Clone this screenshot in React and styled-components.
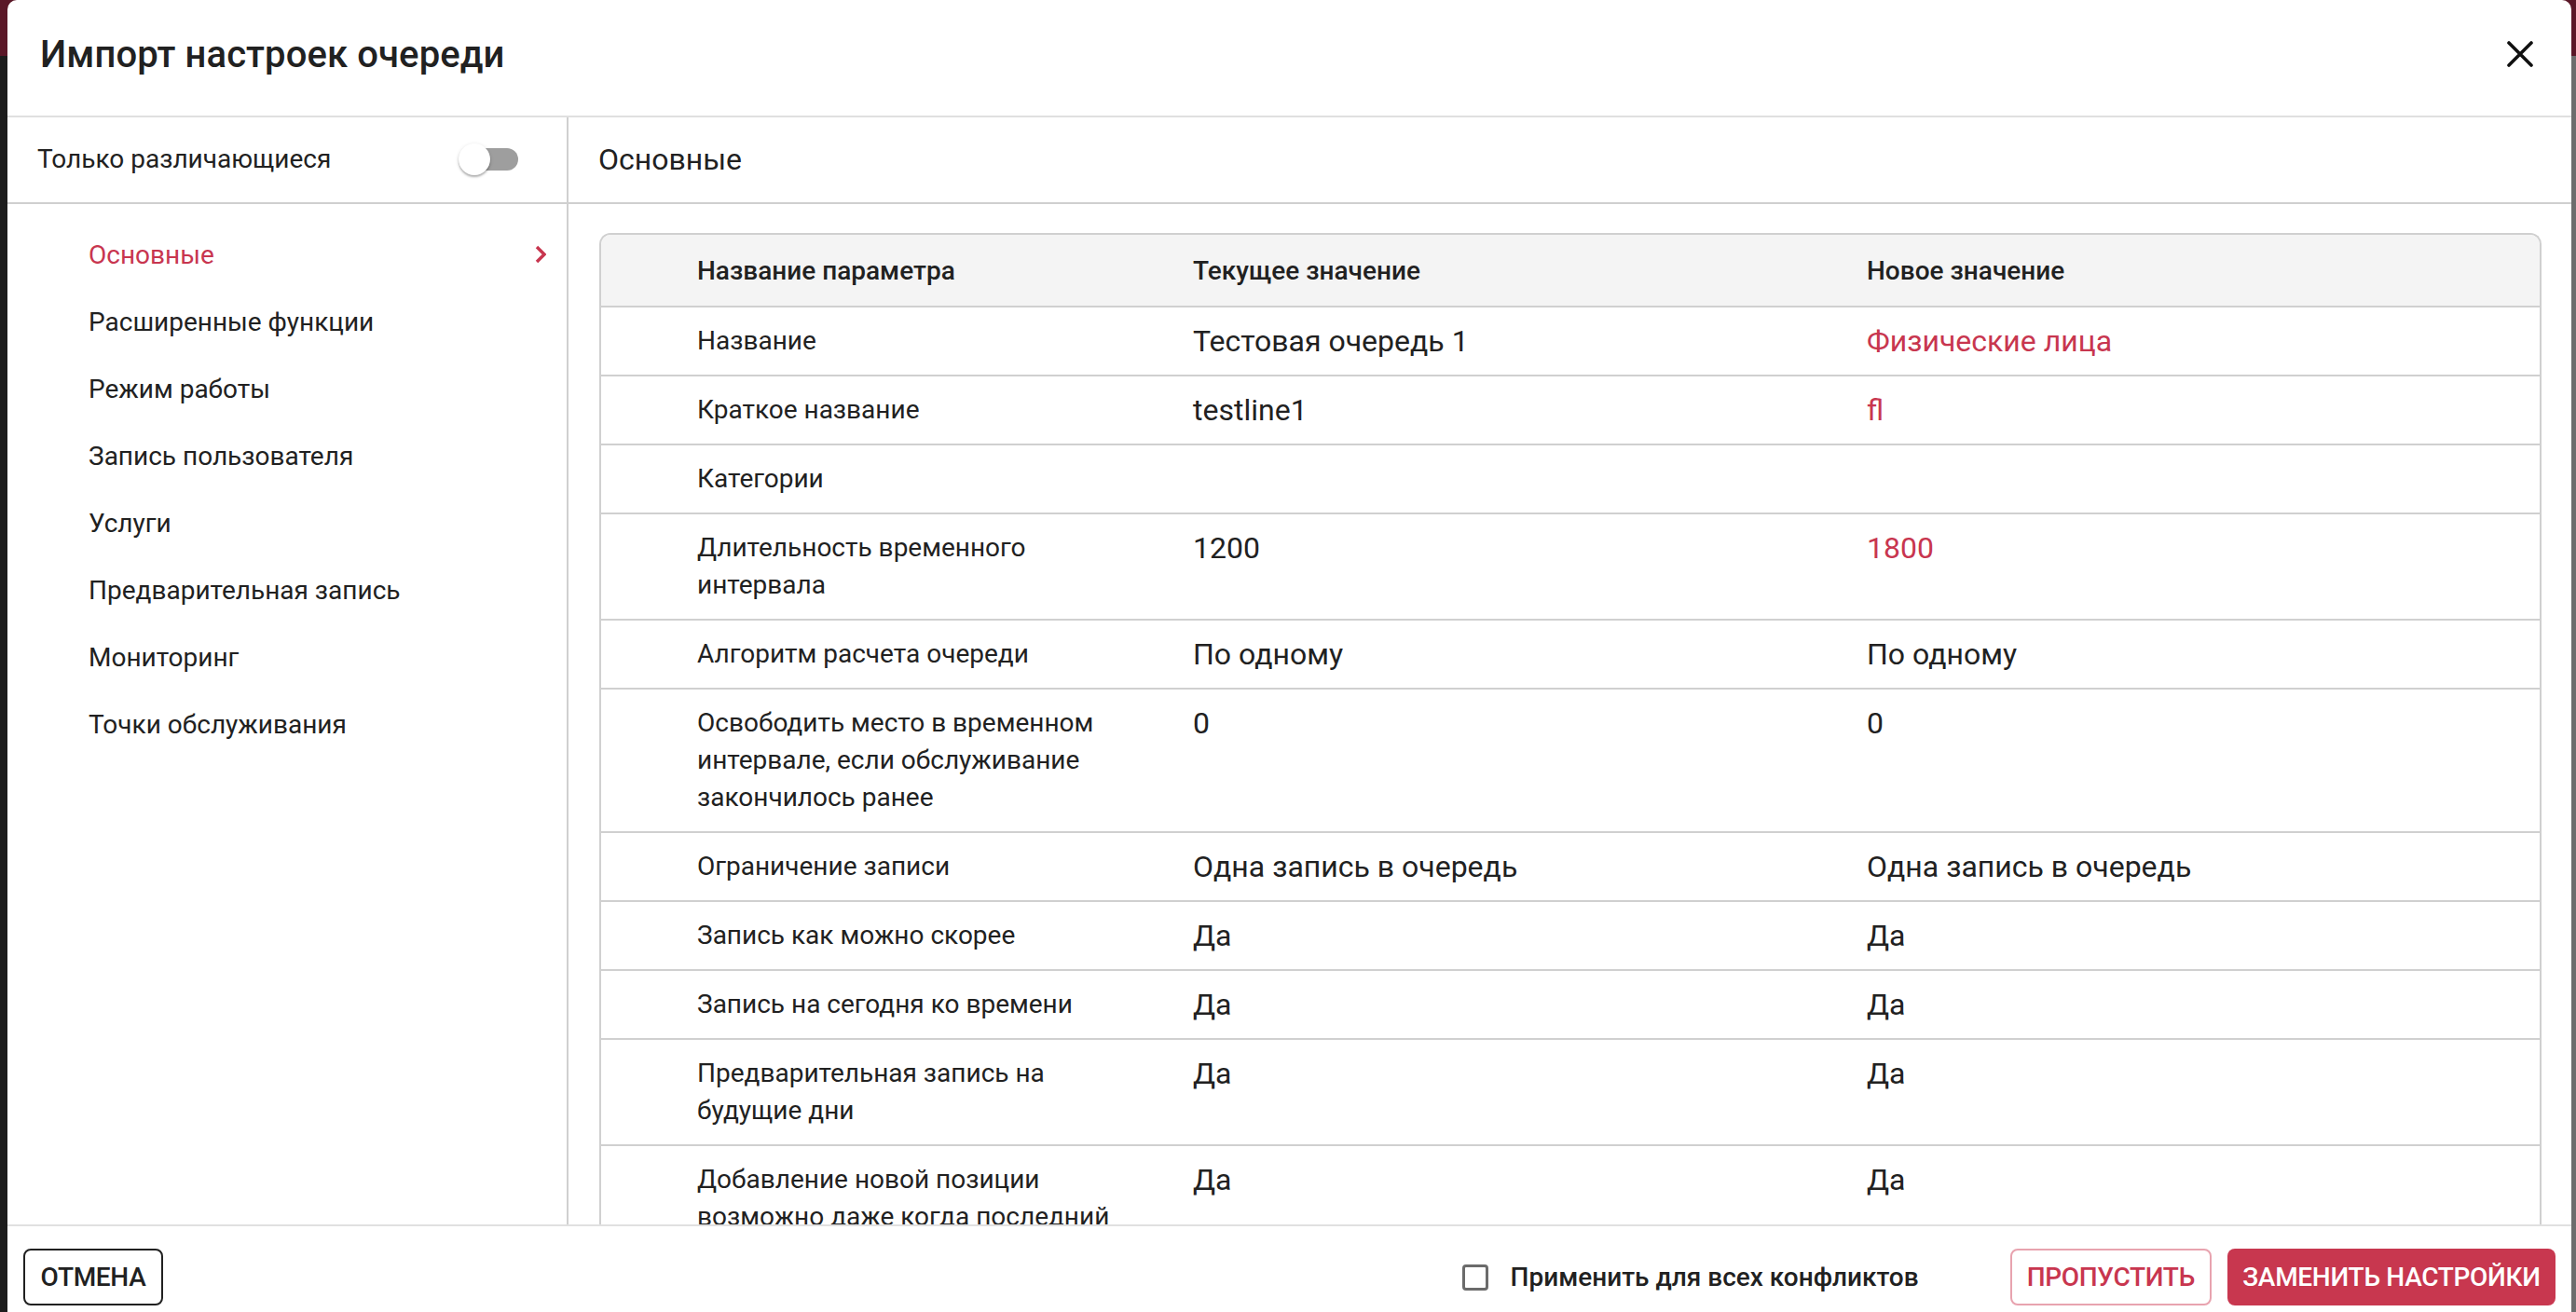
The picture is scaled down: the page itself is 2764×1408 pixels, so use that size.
import styled, { createGlobalStyle } from "styled-components";
import { useState } from "react";

const GlobalStyle = createGlobalStyle`
  html, body {
    margin: 0;
    padding: 0;
    height: 1408px;
    overflow: hidden;
  }
  body {
    font-family: Roboto, "Noto Sans", "Liberation Sans", sans-serif;
    color: #212121;
  }
  * {
    box-sizing: border-box;
  }
`;

const sections = [
  "Основные",
  "Расширенные функции",
  "Режим работы",
  "Запись пользователя",
  "Услуги",
  "Предварительная запись",
  "Мониторинг",
  "Точки обслуживания",
];

const rows = [
  { name: "Название", current: "Тестовая очередь 1", next: "Физические лица", changed: true },
  { name: "Краткое название", current: "testline1", next: "fl", changed: true },
  { name: "Категории", current: "", next: "" },
  { name: "Длительность временного интервала", current: "1200", next: "1800", changed: true },
  { name: "Алгоритм расчета очереди", current: "По одному", next: "По одному" },
  {
    name: "Освободить место в временном интервале, если обслуживание закончилось ранее",
    current: "0",
    next: "0",
  },
  { name: "Ограничение записи", current: "Одна запись в очередь", next: "Одна запись в очередь" },
  { name: "Запись как можно скорее", current: "Да", next: "Да" },
  { name: "Запись на сегодня ко времени", current: "Да", next: "Да" },
  { name: "Предварительная запись на будущие дни", current: "Да", next: "Да" },
  {
    name: "Добавление новой позиции возможно даже когда последний интервал занят",
    current: "Да",
    next: "Да",
  },
  { name: "Показывать на табло", current: "Да", next: "Да" },
];

const App = () => {
  const [onlyDiff, setOnlyDiff] = useState(false);
  const [active, setActive] = useState(0);
  const [applyAll, setApplyAll] = useState(false);

  return (
    <Page>
      <GlobalStyle />
      <Modal>
        <Header>
          <Title>Импорт настроек очереди</Title>
          <CloseButton aria-label="Закрыть">
            <svg width="28" height="28" viewBox="0 0 28 28">
              <path
                d="M2 2 L26 26 M26 2 L2 26"
                stroke="#111"
                strokeWidth="3.6"
                strokeLinecap="round"
              />
            </svg>
          </CloseButton>
        </Header>

        <Body>
          <Sidebar>
            <PanelHead>
              <ToggleLabel>Только различающиеся</ToggleLabel>
              <Switch $on={onlyDiff} onClick={() => setOnlyDiff(!onlyDiff)}>
                <Track $on={onlyDiff} />
                <Thumb $on={onlyDiff} />
              </Switch>
            </PanelHead>
            <NavList>
              {sections.map((s, i) => (
                <NavItem key={s} $active={i === active} onClick={() => setActive(i)}>
                  {s}
                  {i === active && (
                    <svg width="12" height="20" viewBox="0 0 12 20">
                      <polyline
                        points="2,2 10,10 2,18"
                        fill="none"
                        stroke="#c8364f"
                        strokeWidth="3.4"
                      />
                    </svg>
                  )}
                </NavItem>
              ))}
            </NavList>
          </Sidebar>

          <Main>
            <PanelHead>
              <SectionTitle>{sections[active]}</SectionTitle>
            </PanelHead>
            <TableArea>
              <Table>
                <HeadRow>
                  <span />
                  <HeadCell>Название параметра</HeadCell>
                  <HeadCell>Текущее значение</HeadCell>
                  <HeadCell>Новое значение</HeadCell>
                </HeadRow>
                {rows.map((r) => (
                  <Row key={r.name}>
                    <span />
                    <NameCell>{r.name}</NameCell>
                    <ValueCell>{r.current}</ValueCell>
                    <ValueCell $changed={r.changed}>{r.next}</ValueCell>
                  </Row>
                ))}
              </Table>
            </TableArea>
          </Main>
        </Body>

        <Footer>
          <CancelButton>Отмена</CancelButton>
          <FooterRight>
            <CheckLabel onClick={() => setApplyAll(!applyAll)}>
              <CheckBox $checked={applyAll} />
              Применить для всех конфликтов
            </CheckLabel>
            <SkipButton>Пропустить</SkipButton>
            <ReplaceButton>Заменить настройки</ReplaceButton>
          </FooterRight>
        </Footer>
      </Modal>
    </Page>
  );
};

export default App;

const Page = styled.div`
  height: 1408px;
  overflow: hidden;
  padding: 0 5px 0 8px;
  background: linear-gradient(to bottom, #5a1727 0 60px, transparent 60px),
    linear-gradient(to right, #1c1c1c 0 50%, #6d6d6d 50%);
`;

const Modal = styled.div`
  height: 1425px;
  background: #fff;
  border-radius: 10px 10px 0 0;
  display: flex;
  flex-direction: column;
  overflow: hidden;
`;

const Header = styled.div`
  height: 126px;
  flex-shrink: 0;
  display: flex;
  align-items: center;
  justify-content: space-between;
  padding: 0 41px 8px 35px;
  border-bottom: 2px solid #e0e0e0;
`;

const Title = styled.h2`
  margin: 0;
  font-size: 40px;
  font-weight: 500;
  color: #212121;
  letter-spacing: 0.1px;
`;

const CloseButton = styled.button`
  border: none;
  background: none;
  padding: 0;
  display: flex;
  cursor: pointer;
`;

const Body = styled.div`
  flex: 1;
  display: flex;
  min-height: 0;
`;

const Sidebar = styled.div`
  width: 602px;
  flex-shrink: 0;
  border-right: 2px solid #d0d0d0;
  display: flex;
  flex-direction: column;
`;

const PanelHead = styled.div`
  height: 93px;
  flex-shrink: 0;
  display: flex;
  align-items: center;
  justify-content: space-between;
  padding: 0 52px 2px 32px;
  border-bottom: 2px solid #cfcfcf;
`;

const ToggleLabel = styled.span`
  font-size: 28px;
  color: #212121;
`;

const Switch = styled.div`
  position: relative;
  width: 64px;
  height: 34px;
  cursor: pointer;
`;

const Track = styled.span`
  position: absolute;
  left: 6px;
  top: 5px;
  width: 58px;
  height: 24px;
  border-radius: 12px;
  background: ${(p) => (p.$on ? "#e49aa7" : "#9e9e9e")};
`;

const Thumb = styled.span`
  position: absolute;
  top: 0;
  left: ${(p) => (p.$on ? "30px" : "0")};
  width: 34px;
  height: 34px;
  border-radius: 50%;
  background: ${(p) => (p.$on ? "#c8364f" : "#fff")};
  box-shadow: 0 2px 2px rgba(0, 0, 0, 0.25), 0 1px 4px rgba(0, 0, 0, 0.12);
`;

const NavList = styled.ul`
  list-style: none;
  margin: 0;
  padding: 18px 0 0 0;
`;

const NavItem = styled.li`
  height: 72px;
  display: flex;
  align-items: center;
  justify-content: space-between;
  padding: 0 22px 0 87px;
  font-size: 28px;
  color: ${(p) => (p.$active ? "#c8364f" : "#212121")};
  cursor: pointer;
`;

const Main = styled.div`
  flex: 1;
  min-width: 0;
  display: flex;
  flex-direction: column;
`;

const SectionTitle = styled.span`
  font-size: 32px;
  color: #212121;
`;

const TableArea = styled.div`
  flex: 1;
  overflow: hidden;
  padding: 31px 32px 0 33px;
`;

const Table = styled.div`
  border: 2px solid #d0d0d0;
  border-bottom: none;
  border-radius: 12px 12px 0 0;
  overflow: hidden;
`;

const grid = `
  display: grid;
  grid-template-columns: 75px 532px 723px 1fr;
`;

const HeadRow = styled.div`
  ${grid}
  height: 76px;
  align-items: center;
  background: #f4f4f4;
`;

const HeadCell = styled.div`
  padding: 0 28px;
  font-size: 28px;
  font-weight: 500;
  color: #212121;
`;

const Row = styled.div`
  ${grid}
  border-top: 2px solid #d0d0d0;
  padding: 16px 0;
  align-items: start;
`;

const NameCell = styled.div`
  padding: 0 28px;
  font-size: 28px;
  line-height: 40px;
  color: #212121;
`;

const ValueCell = styled.div`
  padding: 0 28px;
  font-size: 32px;
  line-height: 40px;
  color: ${(p) => (p.$changed ? "#c8364f" : "#212121")};
`;

const Footer = styled.div`
  flex-shrink: 0;
  height: 111px;
  display: flex;
  align-items: flex-start;
  justify-content: space-between;
  padding: 24px 17px 0 17px;
  border-top: 2px solid #e0e0e0;
`;

const FooterRight = styled.div`
  display: flex;
  align-items: center;
  gap: 17px;
`;

const BaseButton = styled.button`
  height: 61px;
  font-family: Roboto, "Liberation Sans", sans-serif;
  font-size: 28px;
  font-weight: 500;
  text-transform: uppercase;
  white-space: nowrap;
  letter-spacing: -0.3px;
  border-radius: 8px;
  padding: 0 16px;
  cursor: pointer;
`;

const CancelButton = styled(BaseButton)`
  width: 150px;
  border: 2px solid #212121;
  background: #fff;
  color: #212121;
`;

const SkipButton = styled(BaseButton)`
  min-width: 216px;
  border: 2px solid #e8a3af;
  background: #fff;
  color: #c8364f;
`;

const ReplaceButton = styled(BaseButton)`
  min-width: 352px;
  border: none;
  background: #c8374f;
  color: #fff;
`;

const CheckLabel = styled.label`
  display: flex;
  align-items: center;
  gap: 24px;
  margin-right: 81px;
  font-size: 28px;
  font-weight: 500;
  color: #212121;
  cursor: pointer;
`;

const CheckBox = styled.span`
  width: 28px;
  height: 28px;
  border: 3px solid #6b6b6b;
  border-radius: 4px;
  background: ${(p) => (p.$checked ? "#c8364f" : "#fff")};
`;
